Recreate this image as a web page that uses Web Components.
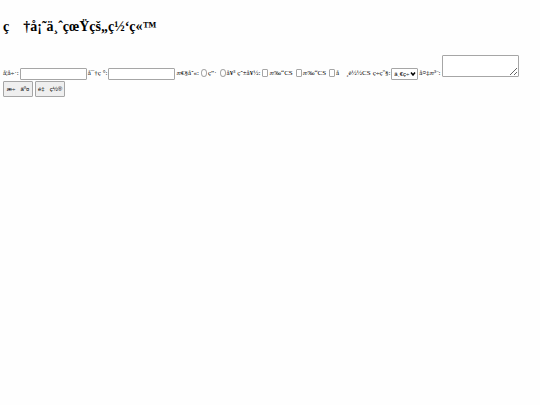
<!DOCTYPE html>
<html lang="en">
<head>
    <meta charset="utf-8">
    <title>ç  †å¡˜ä¸ˆçœŸçš„ç½‘ç«™</title>
    <style>
        body {
            margin: 0;
            padding: 16px 3px;
            background: #fefefe;
            color: #000;
            font-family: "Liberation Serif", serif;
        }
    </style>
</head>
<body>
    <page-title>ç&nbsp;&nbsp;&nbsp; †å¡˜ä¸ˆçœŸçš„ç½‘ç«™</page-title>
    <register-form></register-form>

    <script>
        class PageTitle extends HTMLElement {
            constructor() {
                super();
                this.attachShadow({mode: "open"});
            }

            connectedCallback() {
                this.shadowRoot.innerHTML = `
                    <style>
                        :host { display: block; }
                        h1 {
                            margin: 0 0 17px;
                            font-size: 14px;
                            line-height: 22px;
                        }
                    </style>
                    <h1><slot></slot></h1>`;
            }
        }

        // one label with its control: text box, tick box, radio, list or text area
        class FormField extends HTMLElement {
            constructor() {
                super();
                this.attachShadow({mode: "open"});
            }

            connectedCallback() {
                const type = this.getAttribute("type");
                const label = `<label for="control">${this.getAttribute("label")}</label>`;
                let control = `<input id="control" type="${type}">`;
                if (type === "select") {
                    control = `<select id="control"><option>ä¸€ç÷</option></select>
                               <svg viewBox="0 0 6 4"><path d="M1 .5 3 3 5 .5" fill="none" stroke="#000" stroke-width="1.5"/></svg>`;
                }
                if (type === "textarea") {
                    control = `<textarea id="control"></textarea>`;
                }
                const tick = type === "radio" || type === "checkbox";
                this.shadowRoot.innerHTML = `
                    <style>
                        :host {
                            display: flex;
                            align-items: flex-end;
                            font-size: 7px;
                            line-height: 8px;
                            white-space: nowrap;
                        }
                        label { padding: 0 1px 0 0; margin-bottom: 3px; }
                        .box { display: grid; align-items: center; }
                        .box > * { grid-area: 1 / 1; }
                        input, select, textarea {
                            box-sizing: border-box;
                            height: 12px;
                            margin: 0;
                            padding: 0 2px;
                            border: 1px solid #a6a6a6;
                            border-radius: 1px;
                            background: #fff;
                            color: #000;
                            font-family: "Liberation Sans", sans-serif;
                            font-size: 6px;
                        }
                        input[type=text], input[type=password] { width: 67px; }
                        input[type=radio], input[type=checkbox] {
                            appearance: none;
                            width: 6px;
                            height: 8px;
                            margin: 0 1px 3px 0;
                            padding: 0;
                        }
                        input[type=radio] { border-radius: 50%; }
                        input:checked { background: #0075ff; }
                        select { appearance: none; width: 27px; }
                        svg {
                            width: 6px;
                            height: 4px;
                            margin-right: 2px;
                            justify-self: end;
                            pointer-events: none;
                        }
                        textarea { width: 77px; height: 22px; margin-bottom: 3px; }
                    </style>
                    ${tick ? `<span class="box">${control}</span>` + label : label + `<span class="box">${control}</span>`}`;
            }
        }

        // a captioned row of radios or tick boxes
        class FieldGroup extends HTMLElement {
            constructor() {
                super();
                this.attachShadow({mode: "open"});
            }

            connectedCallback() {
                const caption = this.getAttribute("label");
                this.setAttribute("role", "group");
                this.setAttribute("aria-label", caption);
                this.shadowRoot.innerHTML = `
                    <style>
                        :host {
                            display: flex;
                            align-items: flex-end;
                            gap: 2px;
                            font-size: 7px;
                            line-height: 8px;
                            white-space: nowrap;
                        }
                        span { margin-bottom: 3px; }
                    </style>
                    <span>${caption}</span>
                    <slot></slot>`;
            }
        }

        class FormButton extends HTMLElement {
            constructor() {
                super();
                this.attachShadow({mode: "open"});
            }

            connectedCallback() {
                this.shadowRoot.innerHTML = `
                    <style>
                        :host { display: block; }
                        button {
                            box-sizing: border-box;
                            display: block;
                            min-width: 30px;
                            height: 16px;
                            padding: 0 2px;
                            border: 1px solid #a6a6a6;
                            border-radius: 1px;
                            background: #efefef;
                            color: #000;
                            font-family: "Liberation Sans", sans-serif;
                            font-size: 6px;
                            white-space: nowrap;
                        }
                    </style>
                    <button type="button"><slot></slot></button>`;
            }
        }

        class RegisterForm extends HTMLElement {
            constructor() {
                super();
                this.attachShadow({mode: "open"});
            }

            connectedCallback() {
                this.shadowRoot.innerHTML = `
                    <style>
                        :host { display: block; }
                        .fields {
                            display: flex;
                            flex-wrap: wrap;
                            align-items: flex-end;
                            column-gap: 1px;
                        }
                        .buttons {
                            display: flex;
                            gap: 2px;
                            margin-top: 1px;
                        }
                    </style>
                    <div class="fields">
                        <form-field type="text" label="å­¦å÷·:"></form-field>
                        <form-field type="password" label="å¯†ç&nbsp;°:"></form-field>
                        <field-group label="æ€§åˆ«:">
                            <form-field type="radio" label="ç”·"></form-field>
                            <form-field type="radio" label="å¥³"></form-field>
                        </field-group>
                        <field-group label="çˆ±å¥½:">
                            <form-field type="checkbox" label="æ‰“CS"></form-field>
                            <form-field type="checkbox" label="æ‰“CS"></form-field>
                            <form-field type="checkbox" label="å&nbsp;&nbsp;&nbsp; ¸è½½CS"></form-field>
                        </field-group>
                        <form-field type="select" label="ç÷çº§:"></form-field>
                        <form-field type="textarea" label="å¤‡æ³¨:"></form-field>
                    </div>
                    <div class="buttons">
                        <form-button>æ÷&nbsp;&nbsp; äº¤</form-button>
                        <form-button>é‡&nbsp;&nbsp; ç½®</form-button>
                    </div>`;
            }
        }

        customElements.define("page-title", PageTitle);
        customElements.define("form-field", FormField);
        customElements.define("field-group", FieldGroup);
        customElements.define("form-button", FormButton);
        customElements.define("register-form", RegisterForm);
    </script>
</body>
</html>
